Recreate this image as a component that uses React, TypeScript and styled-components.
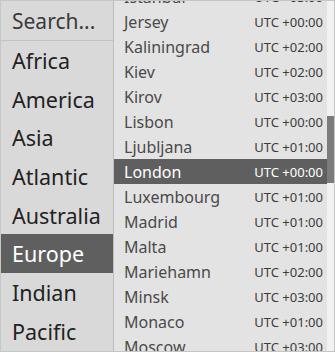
import React, { useLayoutEffect, useRef } from "react";
import styled, { createGlobalStyle } from "styled-components";

const Global = createGlobalStyle`
  html, body { margin: 0; padding: 0; background: #ffffff; }
  * { box-sizing: border-box; }
`;

const Frame = styled.div`
  width: 335px;
  height: 352px;
  border: 1px solid #c6c6c6;
  display: flex;
  overflow: hidden;
  font-family: "Noto Sans", "Open Sans", sans-serif;
`;

const Regions = styled.div`
  width: 113px;
  flex: none;
  background: #d9d9d9;
  border-right: 1px solid #bdbdbd;
  display: flex;
  flex-direction: column;
`;

const Search = styled.div`
  height: 40px;
  flex: none;
  border-bottom: 1px solid #c2c2c2;
  padding-left: 11px;
  display: flex;
  align-items: center;
  font-size: 21px;
  color: #3a3a3a;
`;

const Region = styled.div<{ $active?: boolean }>`
  height: 38.7px;
  flex: none;
  padding-left: 11px;
  display: flex;
  align-items: center;
  font-size: 21.5px;
  color: ${(p) => (p.$active ? "#ffffff" : "#222222")};
  background: ${(p) => (p.$active ? "#5f5f5f" : "transparent")};
`;

const Zones = styled.div`
  flex: 1;
  display: flex;
  background: #e3e3e3;
  min-width: 0;
`;

const ZoneList = styled.div`
  flex: 1;
  min-width: 0;
  overflow: hidden;
`;

const ScrollTrack = styled.div`
  width: 7px;
  flex: none;
  background: #f2f2f2;
  display: flex;
  flex-direction: column;
`;

const ScrollThumb = styled.div<{ $top: number; $size: number }>`
  margin-top: ${(p) => p.$top}px;
  height: ${(p) => p.$size}px;
  background: #7b7b7b;
`;

const Zone = styled.div<{ $active?: boolean }>`
  height: 25px;
  display: flex;
  align-items: center;
  justify-content: space-between;
  padding: 0 4px 0 10px;
  background: ${(p) => (p.$active ? "#5f5f5f" : "transparent")};
`;

const ZoneName = styled.span<{ $active?: boolean }>`
  font-size: 16px;
  color: ${(p) => (p.$active ? "#ffffff" : "#4a4a4a")};
`;

const Offset = styled.span<{ $active?: boolean }>`
  font-size: 13px;
  color: ${(p) => (p.$active ? "#ffffff" : "#3c3c3c")};
`;

const regions = ["Africa", "America", "Asia", "Atlantic", "Australia", "Europe", "Indian", "Pacific"];

const zones: [string, string][] = [
  ["Amsterdam", "+01:00"], ["Andorra", "+01:00"], ["Astrakhan", "+04:00"], ["Athens", "+02:00"],
  ["Belfast", "+00:00"], ["Belgrade", "+01:00"], ["Berlin", "+01:00"], ["Bratislava", "+01:00"],
  ["Brussels", "+01:00"], ["Bucharest", "+02:00"], ["Budapest", "+01:00"], ["Busingen", "+01:00"],
  ["Chisinau", "+02:00"], ["Copenhagen", "+01:00"], ["Dublin", "+00:00"], ["Gibraltar", "+01:00"],
  ["Guernsey", "+00:00"], ["Helsinki", "+02:00"], ["Isle of Man", "+00:00"], ["Istanbul", "+03:00"],
  ["Jersey", "+00:00"], ["Kaliningrad", "+02:00"], ["Kiev", "+02:00"], ["Kirov", "+03:00"],
  ["Lisbon", "+00:00"], ["Ljubljana", "+01:00"], ["London", "+00:00"], ["Luxembourg", "+01:00"],
  ["Madrid", "+01:00"], ["Malta", "+01:00"], ["Mariehamn", "+02:00"], ["Minsk", "+03:00"],
  ["Monaco", "+01:00"], ["Moscow", "+03:00"], ["Nicosia", "+02:00"], ["Oslo", "+01:00"],
  ["Paris", "+01:00"], ["Podgorica", "+01:00"], ["Prague", "+01:00"], ["Riga", "+02:00"],
  ["Rome", "+01:00"], ["Samara", "+04:00"], ["San Marino", "+01:00"], ["Sarajevo", "+01:00"],
  ["Saratov", "+04:00"], ["Simferopol", "+03:00"], ["Skopje", "+01:00"], ["Sofia", "+02:00"],
  ["Stockholm", "+01:00"], ["Tallinn", "+02:00"], ["Tirane", "+01:00"], ["Tiraspol", "+02:00"],
  ["Ulyanovsk", "+04:00"], ["Uzhgorod", "+02:00"], ["Vaduz", "+01:00"], ["Vatican", "+01:00"],
  ["Vienna", "+01:00"], ["Vilnius", "+02:00"], ["Volgograd", "+03:00"], ["Warsaw", "+01:00"],
  ["Zagreb", "+01:00"], ["Zaporozhye", "+02:00"], ["Zurich", "+01:00"],
];

const ROW = 25;
const SCROLL_TOP = 20 * ROW - 8;

export default function App() {
  const listRef = useRef<HTMLDivElement>(null);
  useLayoutEffect(() => {
    if (listRef.current) listRef.current.scrollTop = SCROLL_TOP;
  }, []);
  const thumbSize = 67;
  const thumbTop = 115;
  return (
    <>
      <Global />
      <Frame>
        <Regions>
          <Search>Search...</Search>
          {regions.map((r) => (
            <Region key={r} $active={r === "Europe"}>{r}</Region>
          ))}
        </Regions>
        <Zones>
          <ZoneList ref={listRef}>
            {zones.map(([name, off]) => {
              const active = name === "London";
              return (
                <Zone key={name} $active={active}>
                  <ZoneName $active={active}>{name}</ZoneName>
                  <Offset $active={active}>UTC {off}</Offset>
                </Zone>
              );
            })}
          </ZoneList>
          <ScrollTrack>
            <ScrollThumb $top={thumbTop} $size={thumbSize} />
          </ScrollTrack>
        </Zones>
      </Frame>
    </>
  );
}
